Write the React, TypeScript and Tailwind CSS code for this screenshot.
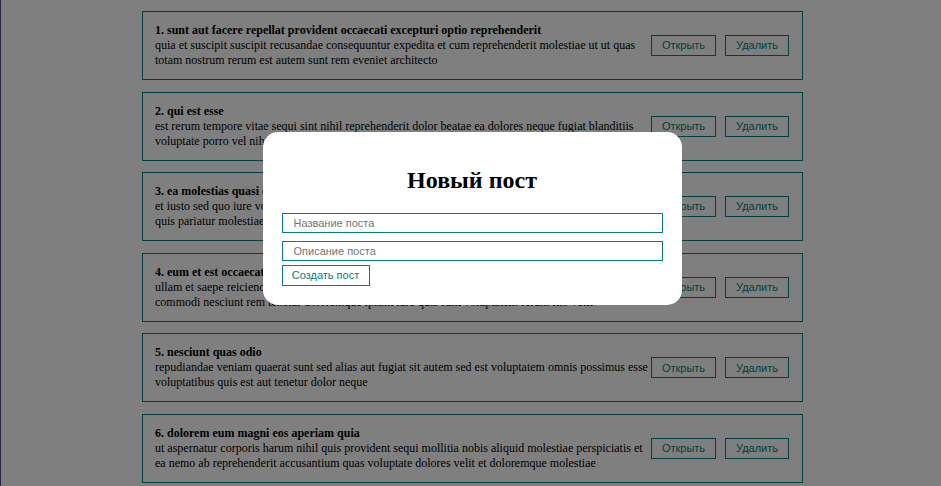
import React from 'react';

interface Post {
  id: number;
  title: string;
  body: string;
}

const posts: Post[] = [
  {
    id: 1,
    title: 'sunt aut facere repellat provident occaecati excepturi optio reprehenderit',
    body: 'quia et suscipit suscipit recusandae consequuntur expedita et cum reprehenderit molestiae ut ut quas totam nostrum rerum est autem sunt rem eveniet architecto',
  },
  {
    id: 2,
    title: 'qui est esse',
    body: 'est rerum tempore vitae sequi sint nihil reprehenderit dolor beatae ea dolores neque fugiat blanditiis voluptate porro vel nihil molestiae ut reiciendis qui aperiam non debitis possimus qui neque nisi nulla',
  },
  {
    id: 3,
    title: 'ea molestias quasi exercitationem repellat qui ipsa sit aut',
    body: 'et iusto sed quo iure voluptatem occaecati omnis eligendi aut ad voluptatem doloribus vel accusantium quis pariatur molestiae porro eius odio et labore et velit aut',
  },
  {
    id: 4,
    title: 'eum et est occaecati',
    body: 'ullam et saepe reiciendis voluptatem adipisci sit amet autem assumenda provident rerum culpa quis hic commodi nesciunt rem tenetur doloremque ipsam iure quis sunt voluptatem rerum illo velit',
  },
  {
    id: 5,
    title: 'nesciunt quas odio',
    body: 'repudiandae veniam quaerat sunt sed alias aut fugiat sit autem sed est voluptatem omnis possimus esse voluptatibus quis est aut tenetur dolor neque',
  },
  {
    id: 6,
    title: 'dolorem eum magni eos aperiam quia',
    body: 'ut aspernatur corporis harum nihil quis provident sequi mollitia nobis aliquid molestiae perspiciatis et ea nemo ab reprehenderit accusantium quas voluptate dolores velit et doloremque molestiae',
  },
];

const PostItem: React.FC<{ post: Post }> = ({ post }) => (
  <div className="flex items-center border border-[#008080] pl-[12px] pr-[13px] py-[11px]">
    <div className="flex-1 text-[12px] leading-[15px] text-black">
      <strong>
        {post.id}. {post.title}
      </strong>
      <div>{post.body}</div>
    </div>
    <div className="flex shrink-0 gap-[9px]">
      <button className="h-[21px] w-[65px] border border-[#008080] text-[11px] text-[#008080] font-['Liberation_Sans',Arial,sans-serif]">
        Открыть
      </button>
      <button className="h-[21px] w-[64px] border border-[#008080] text-[11px] text-[#008080] font-['Liberation_Sans',Arial,sans-serif]">
        Удалить
      </button>
    </div>
  </div>
);

export default function App() {
  return (
    <div className="relative flex h-[486px] overflow-hidden bg-white font-['Liberation_Serif','Times_New_Roman',serif]">
      <div className="w-px shrink-0 bg-[#4c5474]" />
      <div className="flex-1">
        <div className="mt-[11px] ml-[141px] flex w-[661px] flex-col gap-[11.6px]">
          {posts.map((p) => (
            <PostItem key={p.id} post={p} />
          ))}
        </div>
      </div>

      {/* Modal overlay */}
      <div className="absolute inset-0 flex items-start justify-center bg-black/50 pt-[132px] pl-[3px]">
        <div className="flex w-[419px] flex-col rounded-[15px] bg-white px-[19px] pt-[18px] pb-[19px]">
          <h1 className="mt-[16px] mb-[19px] text-center text-[24px] leading-[28px] font-bold text-black">
            Новый пост
          </h1>
          <input
            className="h-[20px] w-full border border-[#008080] px-[11px] text-[11px] outline-none placeholder:text-[#757575] font-['Liberation_Sans',Arial,sans-serif]"
            placeholder="Название поста"
          />
          <input
            className="mt-[8px] h-[20px] w-full border border-[#008080] px-[11px] text-[11px] outline-none placeholder:text-[#757575] font-['Liberation_Sans',Arial,sans-serif]"
            placeholder="Описание поста"
          />
          <div className="mt-[4px] flex">
            <button className="h-[21px] w-[88px] border border-[#008080] text-[11px] text-[#008080] font-['Liberation_Sans',Arial,sans-serif]">
              Создать пост
            </button>
          </div>
        </div>
      </div>
    </div>
  );
}
